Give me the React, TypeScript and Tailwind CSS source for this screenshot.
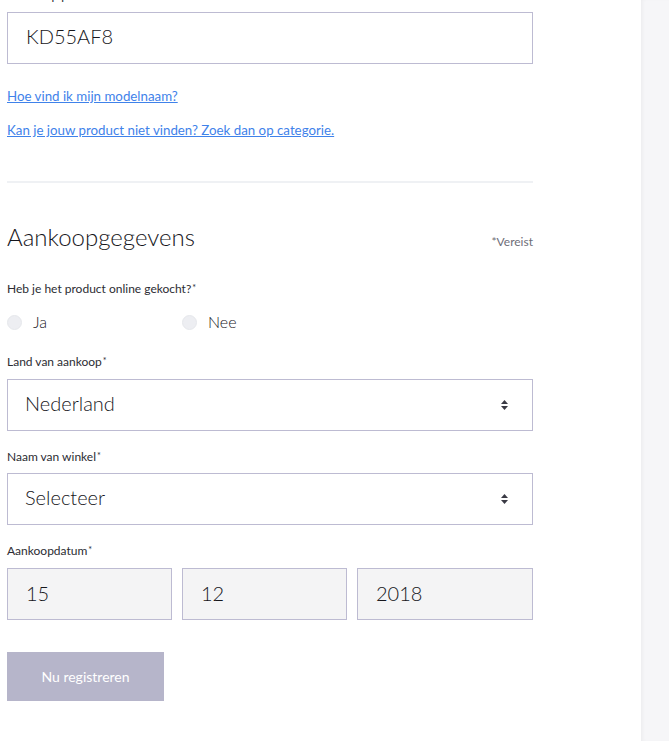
import React from "react";

const font = { fontFamily: "Lato, 'Open Sans', sans-serif" };

function Req() {
  return <sup className="text-[9px] relative top-[-2px] ml-[1px]">*</sup>;
}

function SortArrows() {
  return (
    <svg width="9" height="12" viewBox="0 0 9 12" className="text-[#3a3a44]">
      <path d="M4.5 1 L8 5 L1 5 Z" fill="currentColor" />
      <path d="M1 7 L8 7 L4.5 11 Z" fill="currentColor" />
    </svg>
  );
}

function SelectBox({ value }: { value: string }) {
  return (
    <div className="h-[52px] w-[526px] border border-[#bdbbd2] bg-white flex items-center justify-between pl-[17px] pr-[23px]">
      <span className="text-[20px] font-light text-[#16161b] pb-[4px]">{value}</span>
      <SortArrows />
    </div>
  );
}

function DateBox({ value, w }: { value: string; w: string }) {
  return (
    <div className={`${w} h-[52px] border border-[#bdbbd2] bg-[#f4f4f5] flex items-center pl-[18px]`}>
      <span className="text-[20px] font-light text-[#16161b] pb-[2px]">{value}</span>
    </div>
  );
}

function Radio({ label }: { label: string }) {
  return (
    <div className="flex items-center">
      <span className="w-[15px] h-[15px] rounded-full bg-[#edeef2] border border-[#e6e8ec]" />
      <span className="ml-[11px] text-[16px] font-light text-[#16161b]">{label}</span>
    </div>
  );
}

export default function App() {
  return (
    <div className="flex min-h-[741px] w-full bg-white overflow-hidden" style={font}>
      <main className="w-[641px] shrink-0 pl-[7px]">
        <div className="w-[526px]">
          <div className="h-[12px] mt-[-10px] text-[12px] leading-[12px] text-[#2c2c33] pl-[1px] overflow-hidden">
            Model op product<Req />
          </div>
          <div className="mt-[10px] h-[52px] border border-[#bdbbd2] flex items-center pl-[18px]">
            <span className="text-[20px] font-light text-[#16161b] pb-[5px]">KD55AF8</span>
          </div>

          <div className="mt-[23px] h-[18px] leading-[18px] text-[13.3px]">
            <a href="#" className="text-[#3f82ea] underline">Hoe vind ik mijn modelnaam?</a>
          </div>
          <div className="mt-[16px] h-[18px] leading-[18px] text-[13.3px]">
            <a href="#" className="text-[#3f82ea] underline">
              Kan je jouw product niet vinden? Zoek dan op categorie.
            </a>
          </div>

          <div className="mt-[42px] h-[2px] bg-[#eff1f4]" />

          <div className="mt-[39px] h-[30px] flex items-baseline justify-between">
            <h2 className="text-[24px] font-light leading-[30px] text-[#16161b]">Aankoopgegevens</h2>
            <span className="text-[12px] text-[#6e6e78]">*Vereist</span>
          </div>

          <div className="mt-[29px] h-[16px] leading-[16px] text-[12px] text-[#2c2c33]">
            Heb je het product online gekocht?<Req />
          </div>
          <div className="mt-[16px] h-[18px] flex items-center">
            <div className="w-[175px]">
              <Radio label="Ja" />
            </div>
            <Radio label="Nee" />
          </div>

          <div className="mt-[23px] h-[16px] leading-[16px] text-[12px] text-[#2c2c33]">
            Land van aankoop<Req />
          </div>
          <div className="mt-[9px]">
            <SelectBox value="Nederland" />
          </div>

          <div className="mt-[18px] h-[16px] leading-[16px] text-[12px] text-[#2c2c33]">
            Naam van winkel<Req />
          </div>
          <div className="mt-[8px]">
            <SelectBox value="Selecteer" />
          </div>

          <div className="mt-[18px] h-[16px] leading-[16px] text-[12px] text-[#2c2c33]">
            Aankoopdatum<Req />
          </div>
          <div className="mt-[9px] flex">
            <DateBox value="15" w="w-[165px]" />
            <div className="w-[10px]" />
            <DateBox value="12" w="w-[165px]" />
            <div className="w-[10px]" />
            <DateBox value="2018" w="w-[176px]" />
          </div>

          <button className="mt-[32px] w-[157px] h-[49px] bg-[#b6b5ca] text-white text-[14px]">
            Nu registreren
          </button>
        </div>
      </main>
      <aside className="flex-1 bg-[#f6f6f8] shadow-[inset_3px_0_4px_-2px_rgba(0,0,0,0.05)]" />
    </div>
  );
}
